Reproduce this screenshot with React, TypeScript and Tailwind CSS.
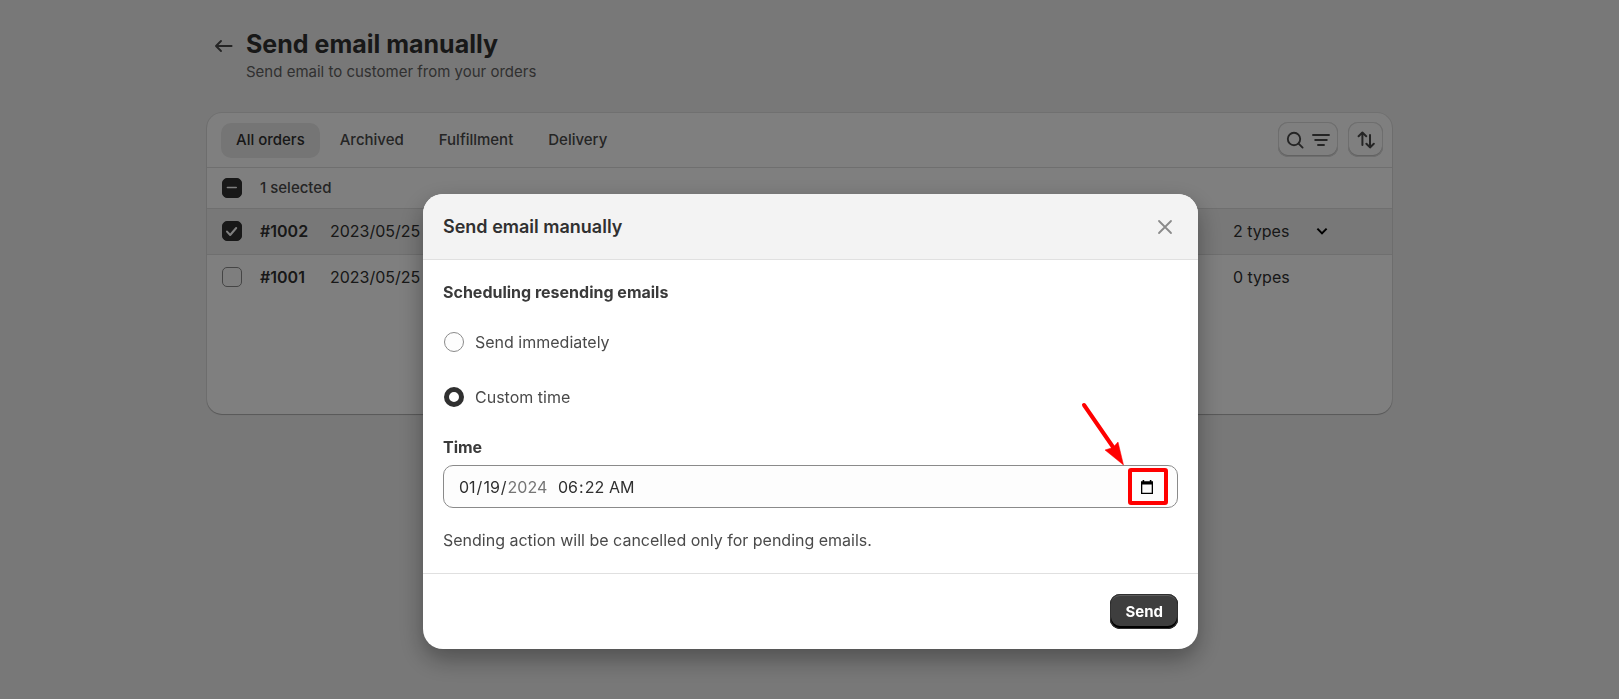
import React, { useRef, useState } from 'react'

const tabs = ['All orders', 'Archived', 'Fulfillment', 'Delivery']

const orders = [
  { id: '#1002', date: '2023/05/25', types: 2 },
  { id: '#1001', date: '2023/05/25', types: 0 },
]

const iconButton =
  'flex h-[35px] items-center justify-center rounded-[10px] bg-white text-[#4a4a4a] shadow-[inset_0_0_0_1px_#dcdcdc,inset_0_-1px_0_1px_#c4c4c4]'

function Check({ id, label, state, onChange }: { id: string; label: string; state: 'on' | 'off' | 'mixed'; onChange: () => void }) {
  return (
    <label htmlFor={id} className="relative block size-5">
      <input
        id={id}
        type="checkbox"
        aria-label={label}
        checked={state !== 'off'}
        onChange={onChange}
        className="block size-5 appearance-none rounded-[5px] border border-[#8a8a8a] bg-[#fdfdfd] checked:border-[#303030] checked:bg-[#303030]"
      />
      {state !== 'off' && (
        <svg viewBox="0 0 20 20" className="pointer-events-none absolute inset-0 size-5" fill="none" stroke="#fff" strokeWidth="2" strokeLinecap="round" strokeLinejoin="round">
          {state === 'mixed' ? <path d="M5.4 9.5h8.8" strokeWidth="1.6" /> : <path d="M5 10.6l3.2 3.4L14.2 7" />}
        </svg>
      )}
    </label>
  )
}

function Orders() {
  const [tab, setTab] = useState('All orders')
  const [selected, setSelected] = useState<string[]>(['#1002'])

  const toggle = (id: string) =>
    setSelected(selected.includes(id) ? selected.filter(s => s !== id) : [...selected, id])

  return (
    <section className="mt-[30px] min-h-[301px] overflow-hidden rounded-[15px] bg-white shadow-[0_1px_1px_rgba(0,0,0,0.22),0_0_0_1px_rgba(0,0,0,0.07)]">
      {/* Tabs and filters */}
      <div className="flex items-start justify-between border-b border-[#dedede] pt-[9px] pr-[9px] pb-[9px] pl-[14px]">
        <div className="flex gap-[5px] pt-px">
          {tabs.map(t => (
            <button
              key={t}
              onClick={() => setTab(t)}
              className={`h-[35px] rounded-[10px] px-[15px] text-[15px] font-medium ${t === tab ? 'bg-[#ebebeb] text-[#303030]' : 'text-[#4a4a4a]'}`}
            >
              {t}
            </button>
          ))}
        </div>
        <div className="flex gap-[10px]">
          <button aria-label="Search and filter" className={`${iconButton} w-[60px] gap-2`}>
            <svg viewBox="0 0 18 18" className="size-[18px]" fill="none" stroke="currentColor" strokeWidth="1.9" strokeLinecap="round">
              <circle cx="8" cy="8" r="6.2" />
              <path d="M12.6 12.6L16.6 16.6" />
            </svg>
            <svg viewBox="0 0 18 18" className="size-[18px]" fill="none" stroke="currentColor" strokeWidth="1.9" strokeLinecap="round">
              <path d="M1 4h16M3.2 9h11.6M6 14h6" />
            </svg>
          </button>
          <button aria-label="Sort" className={`${iconButton} w-[35px]`}>
            <svg viewBox="0 0 18 18" className="size-[18px]" fill="none" stroke="currentColor" strokeWidth="2" strokeLinecap="round" strokeLinejoin="round">
              <path d="M5.4 14V1.8M1.6 5.2l3.8-3.6 3.8 3.6M13 4v12.2M9.4 12.8l3.6 3.6 3.8-3.6" />
            </svg>
          </button>
        </div>
      </div>

      <table className="w-full table-fixed text-left text-[#303030]">
        <colgroup>
          <col className="w-[53px]" />
          <col className="w-[70px]" />
          <col />
          <col className="w-[83px]" />
          <col className="w-[76px]" />
        </colgroup>
        <thead>
          <tr className="h-10">
            <th className="pl-[15px]">
              <Check id="all" label="Select all orders" state={selected.length === 0 ? 'off' : selected.length === orders.length ? 'on' : 'mixed'} onChange={() => setSelected(selected.length ? [] : orders.map(o => o.id))} />
            </th>
            <th colSpan={4} className="text-[15px] font-medium text-[#4a4a4a]">{selected.length} selected</th>
          </tr>
        </thead>
        <tbody className="text-base">
          {orders.map(o => (
            <tr key={o.id} className={`h-[46px] ${selected.includes(o.id) ? 'border-y border-[#dedede] bg-[#f1f1f1]' : ''}`}>
              <td className="pl-[15px]">
                <Check id={o.id} label={`Select order ${o.id}`} state={selected.includes(o.id) ? 'on' : 'off'} onChange={() => toggle(o.id)} />
              </td>
              <td className="font-semibold">{o.id}</td>
              <td>{o.date}</td>
              <td>{o.types} types</td>
              <td>
                {o.types > 0 && (
                  <button aria-label="Show types" className="block">
                    <svg viewBox="0 0 12 12" className="size-3" fill="none" stroke="#000" strokeWidth="2">
                      <path d="M1.4 3.6L6 8.4l4.6-4.8" />
                    </svg>
                  </button>
                )}
              </td>
            </tr>
          ))}
        </tbody>
      </table>
    </section>
  )
}

function SendModal() {
  const [when, setWhen] = useState<'now' | 'custom'>('custom')
  const [date, setDate] = useState('2024-01-19')
  const [time, setTime] = useState('06:22')
  const dateRef = useRef<HTMLInputElement>(null)
  const radio =
    'size-5 appearance-none rounded-full border border-[#8a8a8a] bg-[#fdfdfd] checked:border-[5px] checked:border-[#303030] checked:bg-white'
  const field =
    'bg-transparent outline-none [&::-webkit-calendar-picker-indicator]:hidden [&::-webkit-datetime-edit-year-field]:text-[#757575]'

  return (
    <div role="dialog" aria-modal="true" aria-labelledby="modal-title" className="w-full max-w-[775px] rounded-[20px] bg-white text-base leading-6 text-[#4a4a4a] shadow-[0_10px_25px_rgba(0,0,0,0.35)]">
      <header className="flex items-center justify-between rounded-t-[20px] border-b border-[#e0e0e0] bg-[#f3f3f3] py-5 pr-[25px] pl-5">
        <h2 id="modal-title" className="text-[18px] leading-[25px] font-semibold text-[#303030]">Send email manually</h2>
        <button aria-label="Close">
          <svg viewBox="0 0 16 16" className="size-4" fill="none" stroke="#8a8a8a" strokeWidth="1.8" strokeLinecap="round">
            <path d="M2 2l12 12M14 2L2 14" />
          </svg>
        </button>
      </header>

      <div className="px-5 pt-5 pb-[21px]">
        <h3 className="font-bold text-[#3a3a3a]">Scheduling resending emails</h3>
        <div className="mt-[26px] flex items-center gap-[11px] pl-px">
          <input id="now" type="radio" name="when" checked={when === 'now'} onChange={() => setWhen('now')} className={radio} />
          <label htmlFor="now">Send immediately</label>
        </div>
        <div className="mt-[31px] flex items-center gap-[11px] pl-px">
          <input id="custom" type="radio" name="when" checked={when === 'custom'} onChange={() => setWhen('custom')} className={radio} />
          <label htmlFor="custom">Custom time</label>
        </div>

        <label htmlFor="date" className="mt-[26px] block font-bold text-[#3a3a3a]">Time</label>
        <div className="relative mt-[6px] flex h-[43px] items-center rounded-[10px] border border-[#8a8a8a] bg-[#fdfdfd] pr-[23px] pl-[14px] text-[#303030]">
          <input ref={dateRef} id="date" type="date" value={date} onChange={e => setDate(e.target.value)} className={`${field} w-[93px]`} />
          <input type="time" aria-label="Time of day" value={time} onChange={e => setTime(e.target.value)} className={`${field} ml-[6px]`} />
          <button aria-label="Open calendar" className="ml-auto" onClick={() => dateRef.current?.showPicker()}>
            <svg viewBox="0 0 14 14" className="size-[14px]">
              <path d="M1 1.2h1.6V0h1.6v1.2h5.6V0h1.6v1.2H13V14H1zM2.3 4.6v8.1h9.4V4.6z" fill="#000" fillRule="evenodd" />
            </svg>
          </button>
          {/* Callout on the calendar button */}
          <div className="pointer-events-none absolute top-[2px] right-[9px] h-[37px] w-10 rounded-[3px] border-4 border-[#ff0000]" />
          <svg viewBox="0 0 44 64" className="pointer-events-none absolute -top-16 right-[53px] h-16 w-11" fill="#ff0000" stroke="#ff0000">
            <path d="M4 3L33 45" strokeWidth="4" strokeLinecap="round" fill="none" />
            <path d="M43.5 63L25 48l8-2.5 5-5.5z" strokeWidth="0.5" />
          </svg>
        </div>
        <p className="mt-5">Sending action will be cancelled only for pending emails.</p>
      </div>

      <footer className="flex justify-end border-t border-[#e0e0e0] p-5">
        <button className="h-[35px] rounded-[10px] bg-[#3e3e3e] px-[15px] text-[15px] font-bold text-white shadow-[inset_0_0_0_1px_#303030,inset_0_-2px_0_1px_#000,inset_0_2px_0_0_#5c5c5c]">
          Send
        </button>
      </footer>
    </div>
  )
}

export default function App() {
  return (
    <div className="min-h-screen bg-[#f1f1f1] font-['Inter',sans-serif]">
      <main className="mx-auto max-w-[1205px] pt-[29px] pr-5">
        <div className="flex gap-3 pl-[7px]">
          <a href="#orders" aria-label="Back" className="mt-2 block h-5">
            <svg viewBox="0 0 20 18" className="h-[18px] w-5" fill="none" stroke="#4a4a4a" strokeWidth="1.9" strokeLinecap="round" strokeLinejoin="round">
              <path d="M17.6 9H2.4M7 4L2 9l5 5" />
            </svg>
          </a>
          <div>
            <h1 className="text-[25px] leading-[30px] font-bold text-[#303030]">Send email manually</h1>
            <p className="mt-[2px] text-[15px] leading-[22px] text-[#616161]">Send email to customer from your orders</p>
          </div>
        </div>
        <Orders />
      </main>

      {/* Backdrop and modal */}
      <div className="fixed inset-0 flex items-end justify-center bg-black/50 pb-[50px] pl-[2px]">
        <SendModal />
      </div>
    </div>
  )
}
